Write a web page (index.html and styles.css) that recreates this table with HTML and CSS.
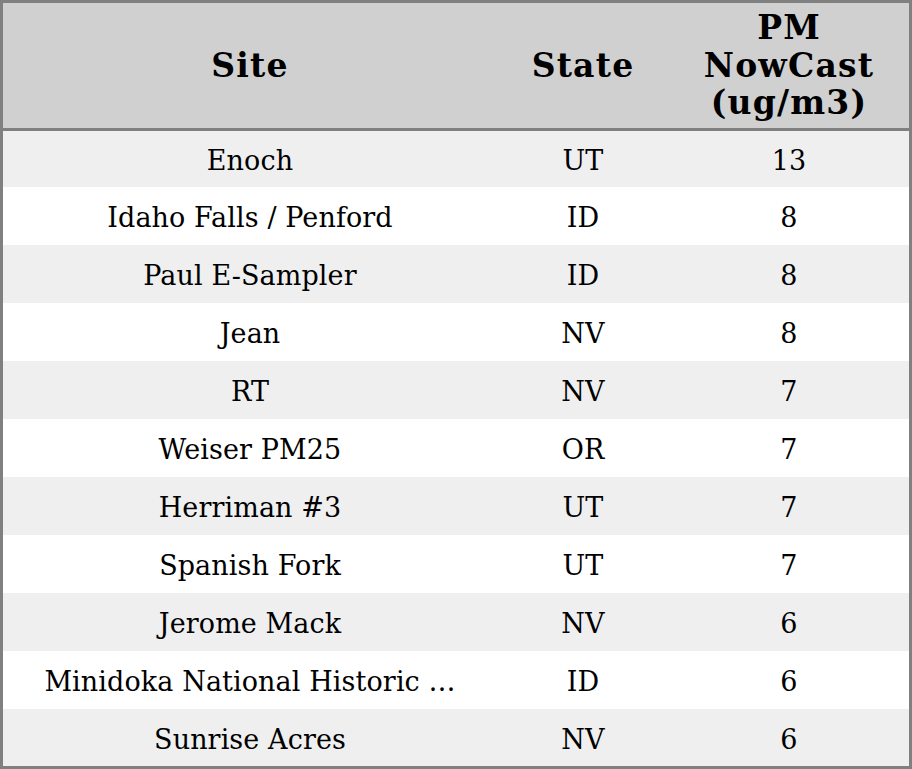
FILE: index.html
```html
<!DOCTYPE html>
<html>
<head>
<meta charset="utf-8">
<link rel="stylesheet" href="styles.css">
</head>
<body>
<div class="table">
  <div class="head">
    <div class="cell">Site</div>
    <div class="cell">State</div>
    <div class="cell">PM NowCast (ug/m3)</div>
  </div>
  <div class="body">
    <div class="row"><div class="cell">Enoch</div><div class="cell">UT</div><div class="cell">13</div></div>
    <div class="row"><div class="cell">Idaho Falls / Penford</div><div class="cell">ID</div><div class="cell">8</div></div>
    <div class="row"><div class="cell">Paul E-Sampler</div><div class="cell">ID</div><div class="cell">8</div></div>
    <div class="row"><div class="cell">Jean</div><div class="cell">NV</div><div class="cell">8</div></div>
    <div class="row"><div class="cell">RT</div><div class="cell">NV</div><div class="cell">7</div></div>
    <div class="row"><div class="cell">Weiser PM25</div><div class="cell">OR</div><div class="cell">7</div></div>
    <div class="row"><div class="cell">Herriman #3</div><div class="cell">UT</div><div class="cell">7</div></div>
    <div class="row"><div class="cell">Spanish Fork</div><div class="cell">UT</div><div class="cell">7</div></div>
    <div class="row"><div class="cell">Jerome Mack</div><div class="cell">NV</div><div class="cell">6</div></div>
    <div class="row"><div class="cell">Minidoka National Historic …</div><div class="cell">ID</div><div class="cell">6</div></div>
    <div class="row"><div class="cell">Sunrise Acres</div><div class="cell">NV</div><div class="cell">6</div></div>
  </div>
</div>
</body>
</html>
```
FILE: styles.css
```css
html, body {
  margin: 0;
  padding: 0;
  background: #ffffff;
}
.table {
  box-sizing: border-box;
  width: 912px;
  height: 769px;
  border: 3px solid #808080;
  display: flex;
  flex-direction: column;
  font-family: "DejaVu Serif", serif;
  color: #000;
}
.head, .row {
  display: grid;
  grid-template-columns: 494px 172px 240px;
}
.head {
  height: 125px;
  background: #d0d0d0;
  border-bottom: 3px solid #808080;
  font-weight: bold;
  font-size: 33px;
  letter-spacing: 1.2px;
  line-height: 37.5px;
}
.head .cell {
  display: flex;
  align-items: center;
  justify-content: center;
  text-align: center;
}
.head .cell:nth-child(3) {
  padding: 0 24px;
}
.body {
  flex: 1;
  display: grid;
  grid-template-rows: 56px repeat(9, 58px) 1fr;
}
.row {
  font-size: 27px;
  letter-spacing: 0.1px;
  align-items: center;
}
.row:nth-child(odd) {
  background: #efefef;
}
.row .cell {
  padding-top: 3px;
  text-align: center;
  white-space: nowrap;
}
```
